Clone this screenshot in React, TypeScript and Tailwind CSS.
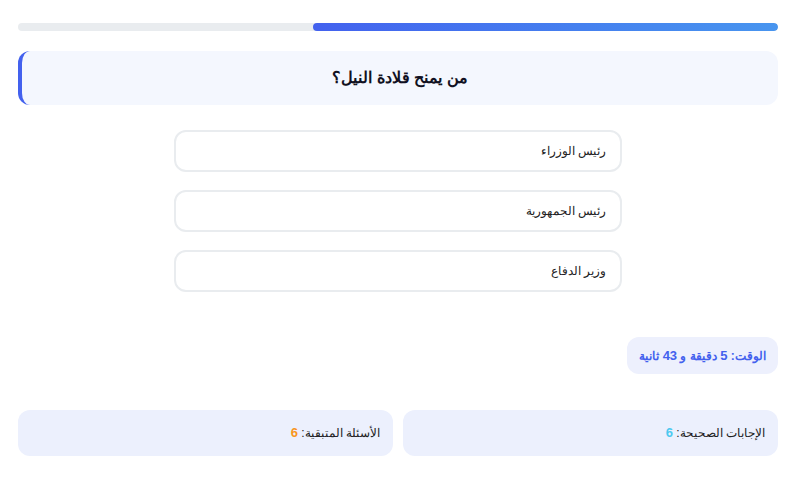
import React from "react";

export default function App() {
  return (
    <div dir="rtl" className="w-[788px] h-[485px] bg-white pl-[18px] pr-[10px] pt-[23px]" style={{ fontFamily: '"Liberation Sans", Arial, sans-serif' }}>
      <div className="h-[8px] w-full rounded-full bg-[#e9ecef] overflow-hidden">
        <div className="h-full w-[61.2%] rounded-full bg-gradient-to-l from-[#4895ef] to-[#4361ee]" />
      </div>

      <div className="mt-[20px] h-[54px] rounded-[12px] bg-[#f4f7fe] border-l-[4px] border-[#4361ee] flex items-center justify-center">
        <h2 className="text-[16px] font-bold text-[#111122]">من يمنح قلادة النيل؟</h2>
      </div>

      <div className="mt-[25px] flex flex-col items-center gap-[18px]">
        {["رئيس الوزراء", "رئيس الجمهورية", "وزير الدفاع"].map((t) => (
          <div key={t} className="w-[448px] h-[42px] rounded-[12px] border-2 border-[#e9ecef] bg-white flex items-center pr-[14px] text-[12px] text-[#222]">
            {t}
          </div>
        ))}
      </div>

      <div className="mt-[45px] flex">
        <div className="w-[151px] h-[37px] rounded-[12px] bg-[#edf0fd] flex items-center justify-center text-[12px] font-bold text-[#4361ee]">
          <span>الوقت: <span className="text-[13px]">5</span> دقيقة و <span className="text-[13px]">43</span> ثانية</span>
        </div>
      </div>

      <div className="mt-[36px] grid grid-cols-2 gap-[10px]">
        <div className="h-[46px] rounded-[12px] bg-[#ecf0fd] flex items-center pr-[13px] text-[12px] text-[#222]">
          <span>الإجابات الصحيحة: <span className="font-bold text-[#4cc9f0] text-[13px]">6</span></span>
        </div>
        <div className="h-[46px] rounded-[12px] bg-[#ecf0fd] flex items-center pr-[13px] text-[12px] text-[#222]">
          <span>الأسئلة المتبقية: <span className="font-bold text-[#f8961e] text-[13px]">6</span></span>
        </div>
      </div>
    </div>
  );
}
